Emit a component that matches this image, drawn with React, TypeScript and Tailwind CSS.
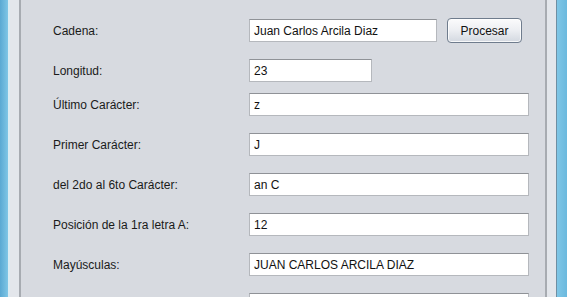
import React from 'react';

const font = { fontFamily: '"Liberation Sans", Arial, sans-serif' };

function Field({ value, width }: { value: string; width: string }) {
  return (
    <div
      className={`${width} h-[23px] bg-white border border-[#b5b8bd] border-t-[#8f9297] flex items-center pl-[4px] text-[12px] text-[#111] whitespace-nowrap overflow-hidden`}
    >
      {value}
    </div>
  );
}

function Row({ label, children, className = '' }: { label: string; children: React.ReactNode; className?: string }) {
  return (
    <div className={`flex items-center ${className}`}>
      <div className="w-[196px] text-[12px] text-[#1a1a1a]">{label}</div>
      {children}
    </div>
  );
}

export default function App() {
  const rows = [
    { label: 'Último Carácter:', value: 'z', mt: 'mt-[11px]' },
    { label: 'Primer Carácter:', value: 'J', mt: 'mt-[17px]' },
    { label: 'del 2do al 6to Carácter:', value: 'an C', mt: 'mt-[17px]' },
    { label: 'Posición de la 1ra letra A:', value: '12', mt: 'mt-[17px]' },
    { label: 'Mayúsculas:', value: 'JUAN CARLOS ARCILA DIAZ', mt: 'mt-[17px]' },
    // next row is below the visible area, only its field's top edge shows
    { label: '', value: '', mt: 'mt-[17px]' },
  ];

  return (
    <div className="flex w-[567px] h-[297px] overflow-hidden" style={font}>
      {/* left window frame */}
      <div className="w-[8px] bg-gradient-to-r from-[#5aa9d3] to-[#7fc6e6]" />
      <div className="w-[2px] bg-[#dcebf3]" />
      <div className="w-[9px] bg-[#e3e6eb]" />
      <div className="w-[2px] bg-[#a7abb1]" />

      {/* content panel */}
      <div className="w-[524px] bg-[#d7dae0] pl-[32px] pt-[18px] flex flex-col">
        <Row label="Cadena:">
          <Field value="Juan Carlos Arcila Diaz" width="w-[188px]" />
          <button className="ml-[10px] w-[75px] h-[25px] rounded-[4px] border border-[#6f7c8d] bg-gradient-to-b from-[#fbfbfc] via-[#eceef2] to-[#d3d8e0] shadow-[inset_0_0_0_1px_rgba(255,255,255,0.8)] text-[12px] text-[#111]">
            Procesar
          </button>
        </Row>
        <Row label="Longitud:" className="mt-[16px]">
          <Field value="23" width="w-[123px]" />
        </Row>
        {rows.map((r, i) => (
          <Row key={i} label={r.label} className={r.mt}>
            <Field value={r.value} width="w-[280px]" />
          </Row>
        ))}
      </div>

      {/* right window frame */}
      <div className="w-[2px] bg-[#a7abb1]" />
      <div className="w-[9px] bg-[#e3e6eb]" />
      <div className="w-[1px] bg-[#6f8fa3]" />
      <div className="w-[10px] bg-gradient-to-r from-[#7fc6e6] to-[#6bb9de]" />
    </div>
  );
}
